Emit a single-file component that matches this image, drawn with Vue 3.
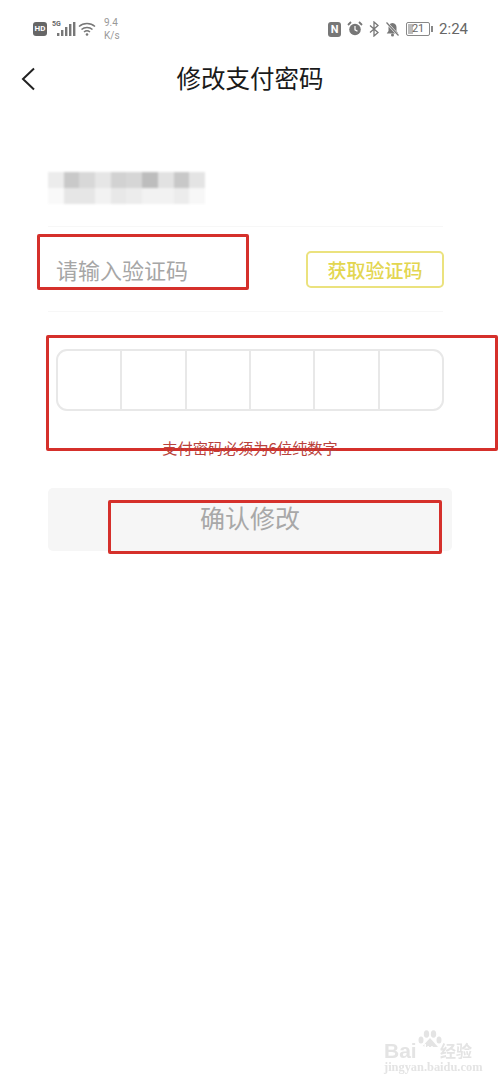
<script setup>
const mosaic = [
  '#ececec', '#c9c9c9', '#d8d8d8', '#e6e6e6', '#d2d2d2', '#d6d6d6', '#bdbdbd', '#e2e2e2', '#c8c8c8', '#e4e4e4',
  '#f9f9f9', '#e6e6e6', '#e6e6e6', '#f2f2f2', '#e8e8e8', '#ececec', '#f2f2f2', '#f2f2f2', '#ececec', '#f7f7f7',
];
const cells = [1, 2, 3, 4, 5, 6];
</script>

<template>
  <main class="page">
    <div class="status">
      <div class="status-left">
        <span class="hd">HD</span>
        <span class="net">
          <span class="five-g">5G</span>
          <svg width="24" height="20" viewBox="0 0 24 20">
            <rect x="5" y="14" width="2.4" height="3" fill="#777" />
            <rect x="9" y="11" width="2.4" height="6" fill="#777" />
            <rect x="13" y="8" width="2.4" height="9" fill="#777" />
            <rect x="17" y="5" width="2.4" height="12" fill="#777" />
            <rect x="21" y="3" width="2.4" height="14" fill="#777" />
          </svg>
        </span>
        <svg class="wifi" width="18" height="16" viewBox="0 0 18 16" fill="none" stroke="#777" stroke-width="1.5">
          <path d="M1 5.5c4.5-4 11.500-4 16 0" />
          <path d="M3.500 8.500c3-2.700 8-2.700 11 0" />
          <path d="M6 11c1.700-1.400 4.300-1.400 6 0" />
          <circle cx="9" cy="13.500" r="1.300" fill="#777" stroke="none" />
        </svg>
        <span class="speed">9.4<br />K/s</span>
      </div>
      <div class="status-right">
        <span class="nfc">N</span>
        <svg width="16" height="16" viewBox="0 0 16 16">
          <circle cx="8" cy="8.500" r="5.800" fill="#777" />
          <path d="M8 5v3.800l2.500 1.500" fill="none" stroke="#fff" stroke-width="1.200" />
          <path d="M1 4l3-3M15 4l-3-3" stroke="#777" stroke-width="1.800" />
        </svg>
        <svg width="10" height="16" viewBox="0 0 10 16" fill="none" stroke="#777" stroke-width="1.300">
          <path d="M1 4.500l8 7-4 3.500V1l4 3.500-8 7" />
        </svg>
        <svg width="15" height="16" viewBox="0 0 15 16">
          <path d="M7.500 2c2.800 0 4 2.200 4 4.500v3.500l1.800 2.500H1.700L3.500 10V6.500C3.500 4.200 4.700 2 7.500 2z" fill="#777" />
          <circle cx="7.500" cy="14" r="1.500" fill="#777" />
          <path d="M1.500 1.500l12 13" stroke="#fff" stroke-width="2.400" />
          <path d="M1.500 1.500l12 13" stroke="#777" stroke-width="1.200" />
        </svg>
        <span class="battery">
          <span class="battery-body"><span class="battery-level"></span><span class="battery-text">21</span></span>
          <span class="battery-tip"></span>
        </span>
        <span class="clock">2:24</span>
      </div>
    </div>

    <header class="nav">
      <svg class="back" width="14" height="24" viewBox="0 0 14 24" fill="none" stroke="#222" stroke-width="2">
        <path d="M13 1.500L2 12l11 10.500" />
      </svg>
      <h1>修改支付密码</h1>
    </header>

    <section class="form">
      <div class="account">
        <i v-for="(c, i) in mosaic" :key="i" :style="{ background: c }"></i>
      </div>

      <div class="code-row">
        <span class="placeholder">请输入验证码</span>
        <button class="get-code">获取验证码</button>
      </div>

      <div class="pwd-box">
        <div v-for="c in cells" :key="c" class="pwd-cell"></div>
      </div>

      <p class="tip">支付密码必须为6位纯数字</p>

      <button class="submit">确认修改</button>
    </section>

    <!-- 标注框 -->
    <div class="mark mark-code"></div>
    <div class="mark mark-pwd"></div>
    <div class="mark mark-submit"></div>

    <div class="watermark">
      <div class="wm-logo">
        <span class="wm-bai">Bai</span>
        <span class="wm-du">du</span>
        <svg class="wm-paw" width="24" height="19" viewBox="0 0 24 19" fill="#e4e4e4">
          <ellipse cx="3" cy="10" rx="2.500" ry="3.500" />
          <ellipse cx="8.500" cy="4" rx="2.700" ry="3.800" />
          <ellipse cx="15.500" cy="4" rx="2.700" ry="3.800" />
          <ellipse cx="21" cy="10" rx="2.500" ry="3.500" />
          <path d="M12 8l8 9H4z" />
        </svg>
        <span class="wm-jy">经验</span>
      </div>
      <div class="wm-url">jingyan.baidu.com</div>
    </div>
  </main>
</template>

<style scoped>
.page {
  position: relative;
  width: 500px;
  height: 1084px;
  background: #fff;
  overflow: hidden;
  font-family: "Noto Sans CJK SC", "Liberation Sans", sans-serif;
}

.status {
  height: 58px;
  display: flex;
  justify-content: space-between;
  align-items: center;
  padding: 0 32px 0 33px;
  color: #777;
  font-family: Roboto, "Liberation Sans", sans-serif;
}

.status-left,
.status-right {
  display: flex;
  align-items: center;
}

.hd {
  width: 14px;
  height: 14px;
  border-radius: 3px;
  background: #666;
  color: #fff;
  font-size: 8px;
  font-weight: 700;
  line-height: 14px;
  text-align: center;
}

.net {
  position: relative;
  display: flex;
  margin-left: 5px;
}

.five-g {
  position: absolute;
  left: 0;
  top: 1px;
  font-size: 7px;
  font-weight: 700;
  line-height: 8px;
  color: #666;
}

.wifi {
  margin-left: 2px;
}

.speed {
  margin-left: 8px;
  font-size: 10px;
  line-height: 13px;
  color: #999;
}

.status-right {
  gap: 6px;
}

.nfc {
  width: 13px;
  height: 15px;
  border-radius: 3px;
  background: #777;
  color: #fff;
  font-size: 11px;
  font-weight: 700;
  line-height: 15px;
  text-align: center;
}

.battery {
  display: flex;
  align-items: center;
  gap: 1px;
}

.battery-body {
  position: relative;
  width: 24px;
  height: 14px;
  border: 1px solid #888;
  box-sizing: border-box;
  border-radius: 2px;
}

.battery-level {
  position: absolute;
  left: 1px;
  top: 1px;
  bottom: 1px;
  width: 5px;
  background: #bbb;
}

.battery-text {
  position: absolute;
  inset: 0;
  font-size: 11px;
  line-height: 12px;
  text-align: center;
  color: #666;
}

.battery-tip {
  width: 2px;
  height: 6px;
  background: #888;
}

.clock {
  font-size: 15px;
  color: #666;
}

.nav {
  position: relative;
  height: 42px;
  display: flex;
  align-items: center;
  justify-content: center;
}

.back {
  position: absolute;
  left: 21px;
  top: 9px;
}

h1 {
  margin: 0 0 2px;
  font-size: 24.500px;
  font-weight: 400;
  line-height: 40px;
  color: #1a1a1a;
}

.form {
  display: flex;
  flex-direction: column;
  align-items: flex-start;
  padding-left: 48px;
}

.account {
  width: 157px;
  height: 32px;
  margin-top: 72px;
  display: grid;
  grid-template-columns: repeat(10, 1fr);
  grid-template-rows: 1fr 1fr;
  filter: blur(1px);
}

.code-row {
  box-sizing: border-box;
  width: 395px;
  height: 86px;
  margin-top: 22px;
  padding-left: 8px;
  display: flex;
  align-items: center;
  justify-content: space-between;
  border-top: 1px solid #f7f7f7;
  border-bottom: 1px solid #f7f7f7;
}

.placeholder {
  font-size: 22px;
  color: #a6a6a6;
}

.get-code {
  width: 138px;
  height: 37px;
  margin-right: -1px;
  padding: 0;
  background: #fff;
  border: 2px solid #ebe27e;
  border-radius: 5px;
  font-family: inherit;
  font-size: 19px;
  font-weight: 500;
  color: #e3d650;
}

.pwd-box {
  box-sizing: border-box;
  width: 388px;
  height: 62px;
  margin: 37px 0 0 8px;
  display: flex;
  border: 2px solid #e8e8e8;
  border-radius: 11px;
}

.pwd-cell {
  flex: 1;
  border-left: 2px solid #e8e8e8;
}

.pwd-cell:first-child {
  border-left: 0;
}

.tip {
  position: relative;
  z-index: 1;
  width: 404px;
  margin: 26px 0 0;
  font-size: 15.200px;
  line-height: 20px;
  text-align: center;
  color: #b9423c;
}

.submit {
  width: 404px;
  height: 63px;
  margin-top: 31px;
  padding: 0 0 6px;
  background: #f6f6f6;
  border: 0;
  border-radius: 5px;
  font-family: inherit;
  font-size: 25px;
  color: #a8a8a8;
}

.mark {
  position: absolute;
  box-sizing: border-box;
  border: 3px solid #d5302b;
  border-radius: 2px;
}

.mark-code {
  left: 37px;
  top: 234px;
  width: 212px;
  height: 56px;
}

.mark-pwd {
  left: 46px;
  top: 335px;
  width: 452px;
  height: 116px;
}

.mark-submit {
  left: 108px;
  top: 500px;
  width: 334px;
  height: 54px;
}

.watermark {
  position: absolute;
  left: 384px;
  top: 1030px;
  width: 90px;
  color: #e4e4e4;
  filter: blur(0.5px);
}

.wm-logo {
  position: relative;
  height: 31px;
  font-family: "Liberation Sans", sans-serif;
}

.wm-bai {
  position: absolute;
  left: 0;
  top: 10px;
  font-size: 21px;
  font-weight: 700;
  line-height: 21px;
}

.wm-du {
  position: absolute;
  left: 36px;
  top: 12px;
  font-size: 11px;
  font-weight: 700;
  line-height: 12px;
  color: #fff;
  z-index: 1;
}

.wm-paw {
  position: absolute;
  left: 34px;
  top: 0;
}

.wm-jy {
  position: absolute;
  left: 56px;
  top: 10px;
  font-family: "Noto Sans CJK SC", sans-serif;
  font-size: 16px;
  font-weight: 700;
  line-height: 20px;
}

.wm-url {
  font-family: "Liberation Serif", serif;
  font-size: 12.400px;
  font-weight: 700;
  line-height: 12px;
  white-space: nowrap;
}
</style>

<style>
body {
  margin: 0;
  background: #fff;
}
</style>
